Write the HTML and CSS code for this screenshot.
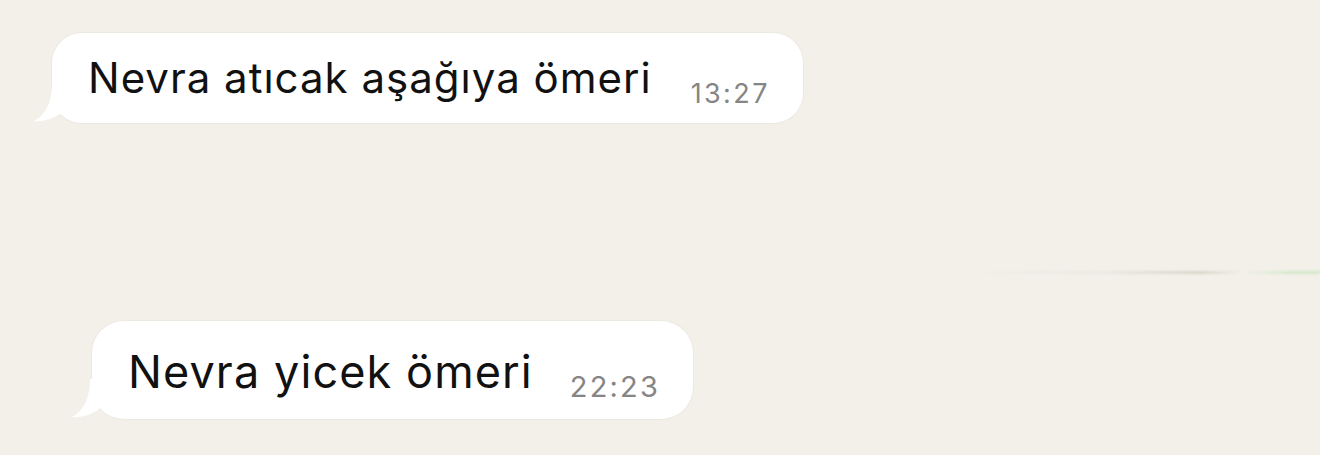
FILE: index.html
```html
<!DOCTYPE html>
<html lang="tr">
<head>
<meta charset="utf-8">
<title>Sohbet</title>
<link rel="stylesheet" href="styles.css">
</head>
<body>
<main class="chat">
  <div class="bubble bubble-first">
    <svg class="tail" width="48" height="40" viewBox="0 0 48 40"><path d="M18,0 C18,18 12,32 0,38 C8,39 18,36 26,31 L48,10 L48,0 Z" fill="#ffffff"/></svg>
    <span class="text">Nevra atıcak aşağıya ömeri</span>
    <span class="time">13:27</span>
  </div>
  <div class="bubble bubble-second">
    <svg class="tail" width="48" height="40" viewBox="0 0 48 40"><path d="M18,0 C18,18 12,32 0,38 C8,39 18,36 26,31 L48,10 L48,0 Z" fill="#ffffff"/></svg>
    <span class="text">Nevra yicek ömeri</span>
    <span class="time">22:23</span>
  </div>
  <div class="smudge"></div>
</main>
</body>
</html>
```
FILE: styles.css
```css
html, body {
  margin: 0;
  padding: 0;
  background: #f3f0ea;
}
body {
  width: 1320px;
  height: 455px;
  overflow: hidden;
  font-family: Inter, "Liberation Sans", Arial, sans-serif;
}
.chat {
  position: relative;
  display: flex;
  flex-direction: column;
  align-items: flex-start;
  height: 455px;
}
.bubble {
  position: relative;
  display: flex;
  align-items: baseline;
  background: #ffffff;
  border-radius: 30px;
  box-shadow: 0 0 0 1px rgba(120, 110, 90, 0.05);
}
.tail {
  position: absolute;
  left: -18px;
  bottom: 0;
  display: block;
}
.text {
  color: #111111;
}
.time {
  color: #858585;
}
.bubble-first {
  margin: 33px 0 0 52px;
  padding: 24px 33px 24px 36px;
}
.bubble-first .text {
  font-size: 42px;
  line-height: 42px;
  letter-spacing: 1px;
}
.bubble-first .time {
  margin-left: 39px;
  font-size: 27px;
  line-height: 27px;
  letter-spacing: 2.4px;
  transform: translateY(10px);
}
.bubble-second {
  margin: 198px 0 0 92px;
  padding: 28px 33px 25px 36px;
  border-radius: 32px;
}
.bubble-second .tail {
  left: -20px;
}
.bubble-second .text {
  font-size: 45px;
  line-height: 45px;
  letter-spacing: 1.1px;
}
.bubble-second .time {
  margin-left: 37px;
  font-size: 29px;
  line-height: 29px;
  letter-spacing: 2.2px;
  transform: translateY(9px);
}
.smudge {
  position: absolute;
  left: 975px;
  top: 271px;
  width: 345px;
  height: 3px;
  background: linear-gradient(90deg, rgba(230,230,225,0) 0%, rgba(215,218,208,0.35) 40%, rgba(160,170,140,0.35) 65%, rgba(240,240,235,0) 78%, rgba(180,225,170,0.5) 92%, rgba(180,225,170,0.5) 100%);
  filter: blur(1px);
}
```
